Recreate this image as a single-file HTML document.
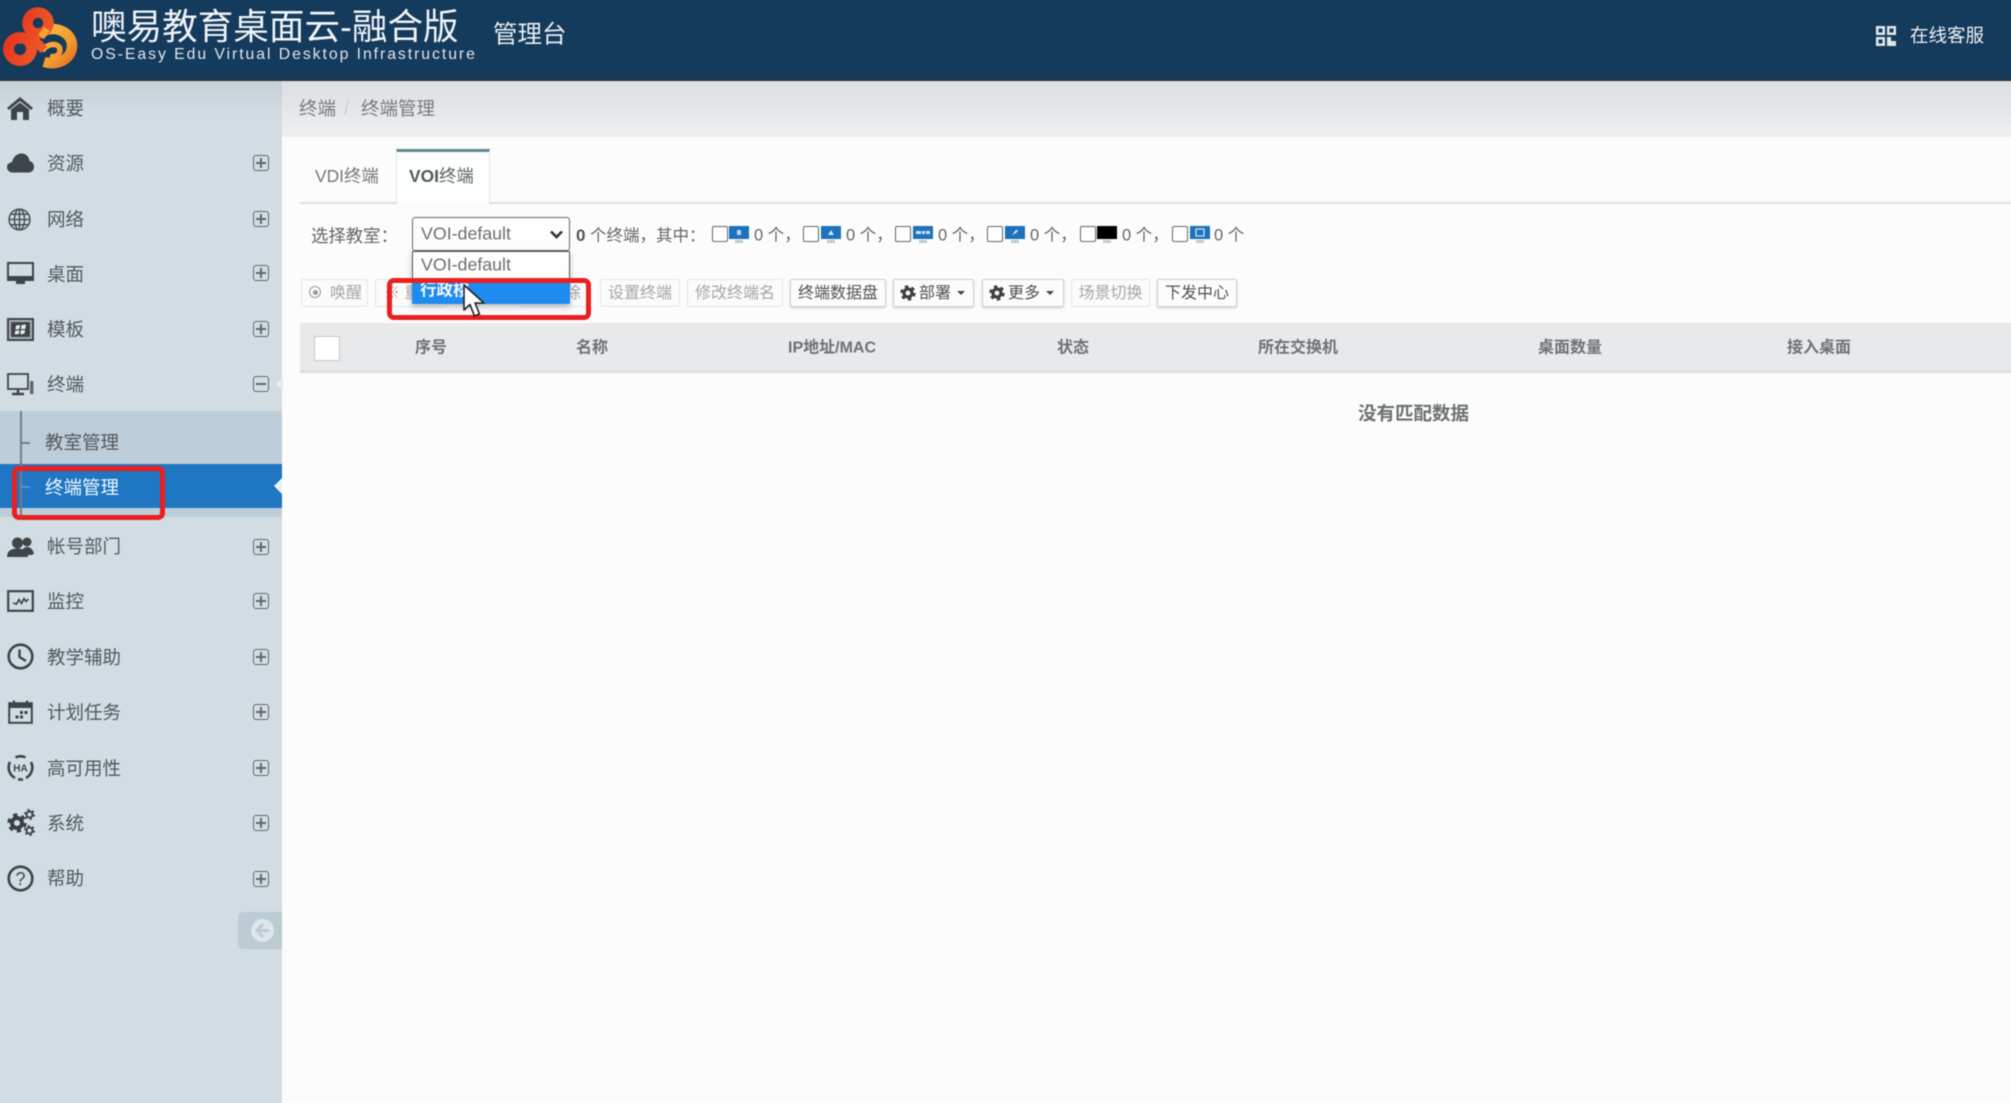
<!DOCTYPE html>
<html lang="zh-CN"><head><meta charset="utf-8"><title>噢易教育桌面云-融合版</title>
<style>
html,body{margin:0;padding:0;width:2011px;height:1103px;overflow:hidden;background:#fbfcfb}
body{font-family:"Liberation Sans","Noto Sans CJK SC",sans-serif;color:#666;position:relative}
div,span,svg{position:absolute}
#w{left:-20px;top:-20px;width:2051px;height:1143px;background:#fbfcfb;filter:blur(.5px)}
#i{left:20px;top:20px;width:2011px;height:1103px}
.t{white-space:nowrap;transform:translateY(calc(-50% + 1.3px));line-height:1.2}
.m{font-size:18.5px;color:#54595d;left:47px}
.pb{left:253px;width:14px;height:14px;border:1.6px solid #666;border-radius:3px;transform:translateY(-50%)}
.pb:before{content:"";position:absolute;left:2px;right:2px;top:6px;height:1.6px;background:#666}
.pb.p:after{content:"";position:absolute;top:2px;bottom:2px;left:6px;width:1.6px;background:#666}
.b{top:279px;height:26px;border:1px solid #e4e6e6;border-radius:2px;background:#fbfbfb;font-size:16px;color:#a4a6a6;line-height:27px;text-align:center;white-space:nowrap}
.b.on{border-color:#cfd1d1;color:#4f5356;box-shadow:0 1px 2px rgba(0,0,0,.18);background:#fcfcfc}
.th{font-size:16px;font-weight:700;color:#6e7275;top:347px}
.cb{top:226px;width:14px;height:14px;border:1.3px solid #666;border-radius:2px;background:#fff}
.c{font-size:16.5px;color:#666;top:235px}
</style></head><body>
<div id="w"><div id="i">
<svg width="0" height="0" style="position:absolute"><defs>
<symbol id="gear" viewBox="0 0 20 20"><circle cx="10" cy="10" r="5" fill="none" stroke="#3b3f42" stroke-width="4"/><circle cx="10" cy="10" r="8" fill="none" stroke="#3b3f42" stroke-width="3.4" stroke-dasharray="4.2 4.2"/></symbol>
<linearGradient id="lr" gradientUnits="userSpaceOnUse" x1="5" y1="30" x2="50" y2="50"><stop offset="0" stop-color="#e5301f"/><stop offset="1" stop-color="#f0602a"/></linearGradient>
<linearGradient id="lo" gradientUnits="userSpaceOnUse" x1="40" y1="30" x2="76" y2="62"><stop offset="0" stop-color="#fbbd3f"/><stop offset=".6" stop-color="#f59a30"/><stop offset="1" stop-color="#e36f1e"/></linearGradient>
</defs></svg>

<!-- header -->
<div style="left:-20px;top:-20px;width:2051px;height:99px;background:#143a5c;border-bottom:2px solid #22343f"></div>
<svg style="left:0;top:0" width="82" height="72" viewBox="0 0 82 72" fill="none">
<path d="M46 30 C 60 26 73 35 72 47 C 71 59 58 66 44 62" stroke="url(#lo)" stroke-width="10.5" fill="none"/>
<path d="M42 51 C 48 42 60 43 60 50 C 60 55 55 58 50 56" stroke="url(#lo)" stroke-width="5.5" fill="none"/>
<circle cx="20" cy="49" r="11.5" stroke="url(#lr)" stroke-width="11"/>
<circle cx="38" cy="23" r="10.5" stroke="url(#lr)" stroke-width="10.5"/>
<path d="M28 33 L44 50 M30 36 L18 40" stroke="url(#lr)" stroke-width="9"/>
<path d="M47 29 L41 37" stroke="#f7a232" stroke-width="7"/>
</svg>
<span class="t" style="left:91px;top:26px;font-size:35.6px;color:#f0f4f7">噢易教育桌面云-融合版</span>
<span class="t" style="left:91px;top:54px;font-size:15.8px;color:#dfe6ec;letter-spacing:1.94px">OS-Easy Edu Virtual Desktop Infrastructure</span>
<span class="t" style="left:493px;top:34px;font-size:24.5px;color:#e8edf1">管理台</span>
<svg style="left:1876px;top:26px" width="20" height="20" viewBox="0 0 20 20"><g fill="#dfe6ec"><path d="M0 0h9v9H0zM11 0h9v9h-9zM0 11h9v9H0z"/><path d="M11 11h4v4h5v5h-9z"/></g><g fill="#143a5c"><rect x="2.5" y="2.5" width="4" height="4"/><rect x="13.5" y="2.5" width="4" height="4"/><rect x="2.5" y="13.5" width="4" height="4"/></g></svg>
<span class="t" style="left:1910px;top:35px;font-size:18.5px;color:#eef2f5">在线客服</span>

<!-- sidebar -->
<div style="left:-20px;top:81px;width:302px;height:1042px;background:linear-gradient(#c6d0d5 0,#d1dde3 32px)"></div>
<div style="left:-20px;top:411px;width:302px;height:106px;background:#bdcdd9"></div>
<div style="left:-20px;top:464px;width:302px;height:44px;background:#1f76c2"></div>
<div style="left:20px;top:411px;width:1.5px;height:106px;background:#6f7f8c"></div>
<div style="left:21px;top:442px;width:9px;height:1.5px;background:#6f7f8c"></div>
<div style="left:21px;top:486px;width:9px;height:1.5px;background:#5d93c6"></div>
<div style="left:274px;top:478px;width:0;height:0;border:8px solid transparent;border-right-color:#e8f2f8;border-left:0"></div>
<div style="left:276px;top:377px;width:0;height:0;border:7px solid transparent;border-right-color:#e4ecf0;border-left:0"></div>

<span class="t m" style="top:108px">概要</span>
<span class="t m" style="top:163px">资源</span>
<span class="t m" style="top:219px">网络</span>
<span class="t m" style="top:274px">桌面</span>
<span class="t m" style="top:329px">模板</span>
<span class="t m" style="top:384px">终端</span>
<span class="t m" style="left:45px;top:442px">教室管理</span>
<span class="t m" style="left:45px;top:487px;color:#f2f8fc">终端管理</span>
<span class="t m" style="top:546px">帐号部门</span>
<span class="t m" style="top:601px">监控</span>
<span class="t m" style="top:657px">教学辅助</span>
<span class="t m" style="top:712px">计划任务</span>
<span class="t m" style="top:768px">高可用性</span>
<span class="t m" style="top:823px">系统</span>
<span class="t m" style="top:878px">帮助</span>

<div class="pb p" style="top:163px"></div><div class="pb p" style="top:219px"></div><div class="pb p" style="top:273px"></div><div class="pb p" style="top:329px"></div><div class="pb" style="top:384px"></div>
<div class="pb p" style="top:547px"></div><div class="pb p" style="top:601px"></div><div class="pb p" style="top:657px"></div><div class="pb p" style="top:712px"></div><div class="pb p" style="top:768px"></div><div class="pb p" style="top:823px"></div><div class="pb p" style="top:879px"></div>

<!-- sidebar icons -->
<svg style="left:6px;top:96px" width="28" height="25" viewBox="0 0 28 25"><path d="M14 1 L27 12 L25 14 L14 5 L3 14 L1 12Z" fill="#3f4447"/><path d="M5 13.5 L14 6.5 L23 13.5 V24 H17 V16 H11 V24 H5Z" fill="#3f4447"/></svg>
<svg style="left:7px;top:153px" width="27" height="20" viewBox="0 0 27 20"><path d="M6 19.5 C2 19.5 0 17 0 14 C0 11 2.5 9.3 5 9.2 C6 4 10 .5 14.5 .5 C19 .5 22 3.5 22.5 8 C25 8.5 27 10.8 27 14 C27 17.3 24.5 19.5 21.5 19.5Z" fill="#3f4447"/></svg>
<svg style="left:8px;top:208px" width="23" height="23" viewBox="0 0 23 23" fill="none" stroke="#4a4f52" stroke-width="1.5"><circle cx="11.5" cy="11.5" r="10.4"/><ellipse cx="11.5" cy="11.5" rx="5" ry="10.4"/><path d="M11.5 1V22M1 11.5H22M2.6 6.2H20.4M2.6 16.8H20.4"/></svg>
<svg style="left:7px;top:262px" width="27" height="23" viewBox="0 0 27 23"><path d="M1 1H26V17H1Z" fill="none" stroke="#3f4447" stroke-width="2"/><rect x="0" y="14" width="27" height="5" fill="#3f4447"/><rect x="9" y="19" width="9" height="3" fill="#3f4447"/></svg>
<svg style="left:7px;top:318px" width="27" height="23" viewBox="0 0 27 23"><rect x="1" y="1" width="25" height="21" fill="#a7b2b8" stroke="#3f4447" stroke-width="2"/><rect x="4" y="4" width="19" height="15" fill="#3f4447"/><path d="M9 7.5L13 7 12.5 11 8.5 11.5ZM14.5 7L19 6.5 18.3 11 14 11.3ZM8.3 12.7L12.3 12.3 11.8 16 7.7 16.5ZM13.8 12.3L18 12.2 17.4 15.8 13.2 16.2Z" fill="#e8eef1"/></svg>
<svg style="left:7px;top:373px" width="27" height="24" viewBox="0 0 27 24" fill="none"><rect x="1" y="1" width="20" height="15" stroke="#444" stroke-width="1.8"/><path d="M11 16V20M5 21H17" stroke="#444" stroke-width="2.4"/><rect x="23" y="8" width="3.5" height="13" fill="#667"/></svg>
<svg style="left:7px;top:537px" width="27" height="20" viewBox="0 0 27 20"><g fill="#3f4447"><circle cx="20" cy="5" r="4.5"/><path d="M14 18C15 12 17 10 20 10S26 12 27 17L24 18Z"/><circle cx="10.5" cy="6" r="5.5"/><path d="M0 20C0 14 4 11.5 10.5 11.5S21 14 21 20Z"/></g></svg>
<svg style="left:7px;top:590px" width="27" height="22" viewBox="0 0 27 22" fill="none"><rect x="1.2" y="1.2" width="24.6" height="19.6" stroke="#3f4447" stroke-width="2.2"/><path d="M6 13L9.5 14 12 9.5 14.5 13.5 17 8.5 19 11.5 21.5 9" stroke="#3f4447" stroke-width="1.6"/></svg>
<svg style="left:7px;top:643px" width="27" height="27" viewBox="0 0 27 27" fill="none" stroke="#3f4447"><circle cx="13.5" cy="13.5" r="11.8" stroke-width="2.6"/><path d="M12.5 6.5V14L19 18" stroke-width="2.4"/></svg>
<svg style="left:8px;top:700px" width="25" height="24" viewBox="0 0 25 24" fill="none"><rect x="1.2" y="3.2" width="22.6" height="19.6" stroke="#3f4447" stroke-width="2"/><rect x="1" y="3" width="23" height="5" fill="#3f4447"/><path d="M6 .5V4M19 .5V4" stroke="#3f4447" stroke-width="2"/><path d="M12 11h3v3h-3zM16.5 11h3v3h-3zM7.5 15.5h3v3h-3zM12 15.5h3v3h-3z" fill="#3f4447"/></svg>
<svg style="left:7px;top:754px" width="27" height="27" viewBox="0 0 27 27" fill="none" stroke="#3f4447" stroke-width="2.6"><path d="M8.5 3.4A11.5 11.5 0 0 1 18.5 3.4"/><path d="M3 8A12 12 0 0 0 8 24"/><path d="M24 8A12 12 0 0 1 19 24"/><path d="M11 25.5H16"/><text x="13.5" y="17.5" text-anchor="middle" font-family="Liberation Sans,sans-serif" font-size="10" font-weight="700" fill="#3f4447" stroke="none">HA</text></svg>
<svg style="left:7px;top:813px" width="20" height="20"><use href="#gear" width="20" height="20"/></svg>
<svg style="left:24px;top:809px" width="11" height="11" viewBox="0 0 20 20" fill="none" stroke="#3f4447"><circle cx="10" cy="10" r="5.5" stroke-width="3.5"/><circle cx="10" cy="10" r="8.5" stroke-width="3" stroke-dasharray="4 5"/></svg>
<svg style="left:24px;top:825px" width="11" height="11" viewBox="0 0 20 20" fill="none" stroke="#3f4447"><circle cx="10" cy="10" r="5.5" stroke-width="3.5"/><circle cx="10" cy="10" r="8.5" stroke-width="3" stroke-dasharray="4 5"/></svg>
<svg style="left:7px;top:865px" width="27" height="27" viewBox="0 0 27 27" fill="none"><circle cx="13.5" cy="13.5" r="11.8" stroke="#3f4447" stroke-width="2.6"/><text x="13.5" y="20" text-anchor="middle" font-family="Liberation Sans,sans-serif" font-size="18" fill="#3f4447">?</text></svg>

<div style="left:238px;top:912px;width:44px;height:37px;background:#bccbd4;border-radius:5px 0 0 5px"></div>
<svg style="left:251px;top:919px" width="23" height="23" viewBox="0 0 23 23"><circle cx="11.5" cy="11.5" r="11.5" fill="#dde6ea"/><path d="M12 5L6 11.5L12 18M6.5 11.5H18" fill="none" stroke="#bccbd4" stroke-width="3"/></svg>

<!-- breadcrumb -->
<div style="left:282px;top:81px;width:1749px;height:56px;background:linear-gradient(#dbdfe1,#eef0f1)"></div>
<span class="t" style="left:299px;top:108px;font-size:18.5px;color:#777c7f">终端</span>
<span class="t" style="left:344px;top:108px;font-size:18px;color:#c8cccf">/</span>
<span class="t" style="left:361px;top:108px;font-size:18.5px;color:#777c7f">终端管理</span>

<!-- tabs -->
<div style="left:300px;top:202px;width:1731px;height:1.5px;background:#dfe2e2"></div>
<div style="left:396px;top:149px;width:92px;height:52px;background:#fdfefe;border-top:3px solid #5f8794;border-left:1px solid #e3e6e6;border-right:1px solid #e3e6e6"></div>
<span class="t" style="left:315px;top:175px;font-size:17.4px;color:#75797c">VDI终端</span>
<span class="t" style="left:409px;top:175px;font-size:17.4px;color:#5e6265"><b style="color:#55595c">VOI</b>终端</span>

<!-- filter row -->
<span class="t" style="left:311px;top:235px;font-size:17.4px;color:#666">选择教室：</span>
<div style="left:412px;top:217px;width:156px;height:32px;border:1.5px solid #666;border-radius:3px;background:#fdfdfd"></div>
<span class="t" style="left:421px;top:233px;font-size:17.8px;color:#6b6f72">VOI-default</span>
<svg style="left:549px;top:229px" width="15" height="11" viewBox="0 0 15 11"><path d="M2 2.5L7.5 8L13 2.5" fill="none" stroke="#333" stroke-width="2.6"/></svg>
<span class="t c" style="left:576px"><b style="font-size:17px;color:#555">0</b> 个终端，其中：</span>

<div class="cb" style="left:712px"></div><div class="cb" style="left:803px"></div><div class="cb" style="left:895px"></div><div class="cb" style="left:987px"></div><div class="cb" style="left:1080px"></div><div class="cb" style="left:1172px"></div>

<svg style="left:729px;top:226px" width="20" height="18" viewBox="0 0 20 18"><rect width="20" height="13" fill="#1d72bb"/><rect x="6" y="14" width="8" height="3" fill="#b9c9d6"/><rect x="8" y="4" width="4" height="5" fill="#bcd6ee"/></svg>
<svg style="left:821px;top:226px" width="20" height="18" viewBox="0 0 20 18"><rect width="20" height="13" fill="#1d72bb"/><rect x="6" y="14" width="8" height="3" fill="#b9c9d6"/><path d="M7 9L10 4 13 9Z" fill="#cfe3f4"/></svg>
<svg style="left:913px;top:226px" width="20" height="18" viewBox="0 0 20 18"><rect width="20" height="13" fill="#1d72bb"/><rect x="6" y="14" width="8" height="3" fill="#b9c9d6"/><path d="M3 5h5v3H3zM9 5h3v3H9zM13 5h4v3h-4z" fill="#cfe3f4"/></svg>
<svg style="left:1005px;top:226px" width="20" height="18" viewBox="0 0 20 18"><rect width="20" height="13" fill="#1d72bb"/><rect x="6" y="14" width="8" height="3" fill="#b9c9d6"/><path d="M7 9.5L10 5 12 3.5 13 5 11 7Z" fill="#cfe3f4"/></svg>
<svg style="left:1097px;top:226px" width="20" height="18" viewBox="0 0 20 18"><rect width="20" height="13" fill="#000"/><rect x="6" y="14" width="8" height="3" fill="#c5cdd3"/></svg>
<svg style="left:1190px;top:226px" width="20" height="18" viewBox="0 0 20 18"><rect width="20" height="13" fill="#1d72bb"/><rect x="6" y="14" width="8" height="3" fill="#b9c9d6"/><path d="M6 3h8v7H6z" fill="none" stroke="#cfe3f4" stroke-width="1.3"/></svg>

<span class="t c" style="left:754px">0 个，</span><span class="t c" style="left:846px">0 个，</span><span class="t c" style="left:938px">0 个，</span><span class="t c" style="left:1030px">0 个，</span><span class="t c" style="left:1122px">0 个，</span><span class="t c" style="left:1214px">0 个</span>

<!-- buttons -->
<div class="b" style="left:301px;width:65px"><span style="left:7px;top:6px;width:10px;height:10px;border:1.6px solid #999;border-radius:50%"></span><span style="left:11px;top:10px;width:5px;height:5px;background:#999;border-radius:50%"></span><span style="left:28px;top:0">唤醒</span></div>
<div class="b" style="left:375px;width:70px;text-align:left"><span style="left:8px;top:0">※ 重启</span></div>
<div class="b" style="left:520px;width:66px"><span style="left:44px;top:0">除</span></div>
<div class="b" style="left:600px;width:78px">设置终端</div>
<div class="b" style="left:687px;width:94px">修改终端名</div>
<div class="b on" style="left:790px;width:94px">终端数据盘</div>
<div class="b on" style="left:893px;width:79px"><svg style="left:6px;top:5px" width="16" height="16"><use href="#gear" width="16" height="16"/></svg><span style="left:25px;top:0">部署</span><span style="left:63px;top:11px;width:0;height:0;border:4.5px solid transparent;border-top-color:#444;border-bottom:0"></span></div>
<div class="b on" style="left:982px;width:80px"><svg style="left:6px;top:5px" width="16" height="16"><use href="#gear" width="16" height="16"/></svg><span style="left:25px;top:0">更多</span><span style="left:63px;top:11px;width:0;height:0;border:4.5px solid transparent;border-top-color:#444;border-bottom:0"></span></div>
<div class="b" style="left:1071px;width:77px">场景切换</div>
<div class="b on" style="left:1157px;width:78px">下发中心</div>

<!-- dropdown -->
<div style="left:412px;top:251px;width:158px;height:53px;background:#fdfdfd;border:1px solid #555;border-bottom:0;box-sizing:border-box;box-shadow:0 3px 6px rgba(0,0,0,.25)"></div>
<span class="t" style="left:421px;top:264px;font-size:17.8px;color:#6b6f72">VOI-default</span>
<div style="left:412px;top:283px;width:158px;height:21px;background:#1d8bef"></div>
<span class="t" style="left:420px;top:290px;font-size:16.5px;color:#f2f8ff;font-weight:700">行政楼</span>
<div style="left:387px;top:278px;width:204px;height:42px;box-sizing:border-box;border:5px solid #ea2020;border-radius:7px"></div>
<svg style="left:462px;top:284px" width="26" height="34" viewBox="0 0 26 34"><path d="M2 1V26L8 20.5L12.5 32L17.5 30L13 19H22Z" fill="#fff" stroke="#222" stroke-width="1.6" stroke-linejoin="round"/></svg>

<!-- red box in sidebar -->
<div style="left:12px;top:466px;width:153px;height:54px;box-sizing:border-box;border:5px solid #ea2020;border-radius:7px"></div>

<!-- table -->
<div style="left:300px;top:323px;width:1731px;height:47px;background:#e7e9eb;border-bottom:3px solid #dcdfe1"></div>
<div style="left:314px;top:336px;width:24px;height:23px;background:#fff;border:1px solid #c4c7c9"></div>
<span class="t th" style="left:415px">序号</span>
<span class="t th" style="left:576px">名称</span>
<span class="t th" style="left:788px">IP地址/MAC</span>
<span class="t th" style="left:1057px">状态</span>
<span class="t th" style="left:1258px">所在交换机</span>
<span class="t th" style="left:1538px">桌面数量</span>
<span class="t th" style="left:1787px">接入桌面</span>
<span class="t" style="left:1358px;top:413px;font-size:18.5px;font-weight:700;color:#6c7073">没有匹配数据</span>
</div></div>
</body></html>
